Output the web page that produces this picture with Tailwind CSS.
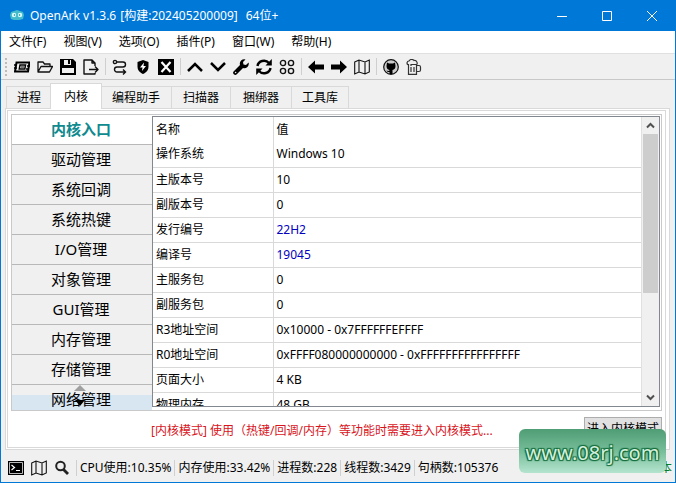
<!DOCTYPE html>
<html lang="zh-CN">
<head>
<meta charset="utf-8">
<title>OpenArk</title>
<script src="https://cdn.jsdelivr.net/npm/@tailwindcss/browser@4"></script>
</head>
<body class="font-['Noto_Sans','Noto_Sans_CJK_SC',sans-serif] text-[12px] leading-[16px] text-black">
<div class="relative flex h-screen flex-col overflow-hidden border border-[#0078d7] bg-[#f0f0f0]">

  <header class="flex h-[30px] shrink-0 items-center bg-[#0078d7] text-white">
    <svg class="ml-2 shrink-0" width="16" height="16" viewBox="0 0 16 16"><path d="M1 7 2 4l3-1 3-1 3 1 3 1 1 3-1 4-4 1H5l-3-1z" fill="#45bccb"/><circle cx="5" cy="7" r="2.200" fill="#d9ffff"/><circle cx="11" cy="7" r="2.200" fill="#d9ffff"/><circle cx="5.500" cy="7" r=".8" fill="#16788f"/><circle cx="10.500" cy="7" r=".8" fill="#16788f"/></svg>
    <h1 class="ml-[5px] flex whitespace-nowrap"><span class="mr-1">OpenArk v1.3.6</span><span class="mr-2">[构建:202405200009]</span><span>64位+</span></h1>
    <div class="ml-auto flex h-full">
      <button aria-label="最小化" class="flex w-[45px] items-center justify-center"><svg width="10" height="10" stroke="#fff"><path d="M0 5.500h10"/></svg></button>
      <button aria-label="最大化" class="flex w-[45px] items-center justify-center"><svg width="10" height="10" stroke="#fff" fill="none"><path d="M.5.5h9v9h-9z"/></svg></button>
      <button aria-label="关闭" class="flex w-[46px] items-center justify-center"><svg width="10" height="10" stroke="#fff"><path d="m0 0 10 10M10 0 0 10"/></svg></button>
    </div>
  </header>

  <nav class="flex h-[23px] shrink-0 items-center gap-[17px] border-b border-[#e0e0e0] bg-white pl-2">
    <button>文件(F)</button><button>视图(V)</button><button>选项(O)</button><button>插件(P)</button><button>窗口(W)</button><button>帮助(H)</button>
  </nav>

  <div class="flex h-[26px] shrink-0 items-center border-b border-[#c8c8c8] pl-1">
    <span class="mr-[7px] h-[18px] border-l-2 border-dotted border-[#bcbcbc]"></span>
    <div class="flex items-center gap-[7px]">
      <button aria-label="控制台"><svg width="16" height="16" viewBox="0 0 16 16" fill="none" stroke="#000"><path d="M2.500 3.500h13l-1.500 9H1z" stroke-width="2"/><path d="M0 6h3M0 9h3M13 7h3M12 10h3" stroke-width="1.500"/><path d="M6 6h5.500l-.7 4H5.300z" stroke-width="1.500"/><path d="M7 8h3"/></svg></button>
      <button aria-label="打开"><svg width="16" height="16" viewBox="0 0 16 16" fill="none" stroke="#111" stroke-width="1.300" stroke-linejoin="round"><path d="M1 13V3h5l1.500 2H13v2.500M1 13l3-5.500h11.500L12.500 13z"/></svg></button>
      <button aria-label="保存"><svg width="16" height="16" viewBox="0 0 16 16"><path fill="#000" d="M0 0h13l3 3v13H0z"/><path fill="#f0f0f0" d="M4 1h7v5H4zM2 9h12v5H2z"/><path fill="#000" d="M8 1h2v4H8z"/></svg></button>
      <button aria-label="导出"><svg width="16" height="16" viewBox="0 0 16 16" fill="none" stroke="#111" stroke-width="1.400" stroke-linejoin="round"><path d="M12 7V4L9 1H1v14h11v-1M9 1v3h3M6 10.500h9M12 7.500l3 3-3 3"/></svg></button>
    </div>
    <span class="mx-[6px] h-[17px] w-px bg-[#cfcfcf]"></span>
    <div class="flex items-center gap-[7px]">
      <button aria-label="路径"><svg width="16" height="16" viewBox="0 0 16 16" fill="none" stroke="#111" stroke-width="1.400"><path d="M4.500 3H11a2.500 2.500 0 0 1 0 5H5a2.500 2.500 0 0 0 0 5h8M11 10.500l2.500 2.500-2.500 2.500"/><circle cx="3" cy="3" r="1.600"/></svg></button>
      <button aria-label="防护"><svg width="16" height="16" viewBox="0 0 16 16"><path d="m8 1 5.500 2v4.500c0 4-2.500 6-5.500 7.500-3-1.500-5.500-3.500-5.500-7.500V3z"/><path fill="#fff" d="M9 3.500 5 8.500h2.500L7 12l4-5H8.500z"/></svg></button>
      <button aria-label="停止"><svg width="16" height="16" viewBox="0 0 16 16"><path d="M0 0h16v16H0z"/><path stroke="#fff" stroke-width="2.200" d="m3.500 3 9 10M12.500 3l-9 10"/></svg></button>
    </div>
    <span class="mx-[6px] h-[17px] w-px bg-[#cfcfcf]"></span>
    <div class="flex items-center gap-[7px]">
      <button aria-label="向上"><svg width="16" height="16" viewBox="0 0 16 16" fill="none" stroke="#000" stroke-width="2.500"><path d="m1 12 7-7 7 7"/></svg></button>
      <button aria-label="向下"><svg width="16" height="16" viewBox="0 0 16 16" fill="none" stroke="#000" stroke-width="2.500"><path d="m1 4 7 7 7-7"/></svg></button>
      <button aria-label="工具"><svg width="16" height="16" viewBox="0 0 16 16"><path d="M15.600 3.500 13 6l-2.500-.5L10 3 12.500.4A4.500 4.500 0 0 0 7 6L.8 12.200a2 2 0 0 0 3 3L10 9a4.500 4.500 0 0 0 5.600-5.500z"/><circle cx="2.600" cy="13.500" r=".8" fill="#f0f0f0"/></svg></button>
      <button aria-label="刷新"><svg width="16" height="16" viewBox="0 0 16 16" fill="none" stroke="#000" stroke-width="2.400"><path d="M1.500 7A6.500 6 0 0 1 13 4M14.500 9A6.500 6 0 0 1 3 12"/><path fill="#000" stroke="none" d="M15.800 0v6.500H9.500zM.2 16V9.500h6.300z"/></svg></button>
      <button aria-label="网格"><svg width="16" height="16" viewBox="0 0 16 16" fill="none" stroke="#111" stroke-width="1.400"><circle cx="4" cy="4" r="2.600"/><circle cx="12" cy="4" r="2.600"/><circle cx="4" cy="12" r="2.600"/><circle cx="12" cy="12" r="2.600"/></svg></button>
    </div>
    <span class="mx-[6px] h-[17px] w-px bg-[#cfcfcf]"></span>
    <div class="flex items-center gap-[7px]">
      <button aria-label="后退"><svg width="16" height="16" viewBox="0 0 16 16"><path d="M0 8l7-6.500v4h9v5H7v4z"/></svg></button>
      <button aria-label="前进"><svg width="16" height="16" viewBox="0 0 16 16"><path d="M16 8 9 1.500v4H0v5h9v4z"/></svg></button>
      <button aria-label="地图"><svg width="16" height="16" viewBox="0 0 16 16" fill="none" stroke="#111" stroke-width="1.100"><path d="M.7 3 5 1l6 2 4.300-2v12L11 15l-6-2-4.300 2zM5 1v12M11 3v12"/></svg></button>
    </div>
    <span class="mx-[6px] h-[17px] w-px bg-[#cfcfcf]"></span>
    <div class="flex items-center gap-[7px]">
      <button aria-label="GitHub"><svg width="16" height="16" viewBox="0 0 16 16"><circle cx="8" cy="8" r="7.300" fill="#ccc" stroke="#111" stroke-width="1.200"/><path d="M4 3.500 6 4.500h4l2-1 .5 3.500c0 2.500-1 3.500-3 4v4h-3v-2c-2 .3-2.500-.5-3-1.500 1 .3 2 .8 3 0V11c-2-.5-3-1.500-3-4z"/></svg></button>
      <button aria-label="赞助"><svg width="16" height="16" viewBox="0 0 16 16" fill="none" stroke="#333" stroke-width="1.200"><path d="M2.500 5v10.400h8V5M10.500 6.500H13q1.500 0 1.500 1.500v3q0 1.500-1.500 1.500h-2.500M5 8v5M8 8v5M2.500 6C0 5 1 2 3 2c1-2 4-2 5-.5C11 1 12 5 10.500 5.500H5V7"/></svg></button>
    </div>
  </div>

  <main class="flex min-h-0 flex-1 flex-col pl-1 pr-[5px] pt-[3px]">
    <div role="tablist" class="flex h-[25px] shrink-0 items-end pl-px">
      <button role="tab" class="h-[22px] border-l border-t border-[#d9d9d9] px-[10px]">进程</button>
      <button role="tab" aria-selected="true" class="relative z-10 -mx-px -mb-px h-[26px] border-x border-t border-[#d9d9d9] bg-white px-[13px]">内核</button>
      <button role="tab" class="h-[22px] border-r border-t border-[#d9d9d9] px-[11px]">编程助手</button>
      <button role="tab" class="h-[22px] border-r border-t border-[#d9d9d9] px-[11px]">扫描器</button>
      <button role="tab" class="h-[22px] border-r border-t border-[#d9d9d9] px-3">捆绑器</button>
      <button role="tab" class="h-[22px] border-r border-t border-[#d9d9d9] px-[10px]">工具库</button>
    </div>

    <div class="flex min-h-0 flex-1 flex-col border border-[#d9d9d9] bg-white py-px pl-px pr-[3px]">
      <div class="flex min-h-0 flex-1 flex-col border border-[#d9d9d9] px-[3px] pt-[3px]">
        <div class="flex min-h-0 flex-1 border border-[#c9c9c9]">
          <aside class="relative w-[140px] shrink-0 overflow-hidden bg-[#f0f0f0] text-[15px] leading-[29px]">
            <ul class="text-center *:h-[30px] *:border-b *:border-[#b8b8b8] *:pr-[2px]">
              <li class="bg-white font-bold text-[#0f8a8f]">内核入口</li><li>驱动管理</li><li>系统回调</li><li>系统热键</li><li>I/O管理</li><li>对象管理</li><li>GUI管理</li><li>内存管理</li><li>存储管理</li><li class="bg-linear-to-b from-[#f0f0f0] from-33% to-[#d8e6f2] to-33%">网络管理</li>
            </ul>
            <svg class="absolute bottom-[3px] left-[62px]" width="12" height="22" viewBox="0 0 12 22"><path fill="#a0a0a0" d="m0 6 6-6 6 6z"/><path d="M1 15h10l-5 6z"/></svg>
          </aside>
          <div class="flex min-w-0 flex-1 pb-[3px] pt-px pr-px">
            <div class="flex min-w-0 flex-1 border border-[#828790]">
              <div class="min-w-0 flex-1 overflow-hidden">
                <table class="w-full table-fixed border-collapse text-left">
                  <colgroup><col class="w-[120px]"><col></colgroup>
                  <thead><tr class="h-[25px] *:px-[3px] *:font-normal"><th class="border-r border-[#d9d9d9]">名称</th><th>值</th></tr></thead>
                  <tbody class="*:h-[25px] *:border-b *:border-[#d9d9d9] [&_td]:px-[3px] [&_td:first-child]:border-r [&_td:first-child]:border-[#d9d9d9]">
                    <tr><td>操作系统</td><td>Windows 10</td></tr>
                    <tr><td>主版本号</td><td>10</td></tr>
                    <tr><td>副版本号</td><td>0</td></tr>
                    <tr><td>发行编号</td><td class="text-[#0000c0]">22H2</td></tr>
                    <tr><td>编译号</td><td class="text-[#0000c0]">19045</td></tr>
                    <tr><td>主服务包</td><td>0</td></tr>
                    <tr><td>副服务包</td><td>0</td></tr>
                    <tr><td>R3地址空间</td><td>0x10000 - 0x7FFFFFFEFFFF</td></tr>
                    <tr><td>R0地址空间</td><td>0xFFFF080000000000 - 0xFFFFFFFFFFFFFFFF</td></tr>
                    <tr><td>页面大小</td><td>4 KB</td></tr>
                    <tr><td>物理内存</td><td>48 GB</td></tr>
                  </tbody>
                </table>
              </div>
              <div class="flex w-[18px] shrink-0 flex-col border-l border-[#e0e0e0] bg-[#f0f0f0] px-px">
                <button aria-label="向上滚动" class="flex h-[17px] items-center justify-center"><svg width="9" height="7" fill="none" stroke="#505050" stroke-width="2"><path d="m1 5.500 3.500-3.500L8 5.500"/></svg></button>
                <div class="h-[159px] bg-[#cdcdcd]"></div>
                <button aria-label="向下滚动" class="mt-auto flex h-[17px] items-center justify-center"><svg width="9" height="7" fill="none" stroke="#505050" stroke-width="2"><path d="M1 1.500 4.500 5 8 1.500"/></svg></button>
              </div>
            </div>
          </div>
        </div>
        <div class="flex h-[36px] shrink-0 items-center pl-[140px]">
          <p class="flex-1 pt-1 text-[#d8141c]">[内核模式] 使用（热键/回调/内存）等功能时需要进入内核模式...</p>
          <button class="h-[24px] w-[78px] border border-[#adadad] bg-[#e1e1e1] whitespace-nowrap">进入内核模式</button>
        </div>
      </div>
    </div>
  </main>

  <footer class="flex h-[32px] shrink-0 items-center pl-[7px] pr-[3px] pt-1">
    <div class="flex items-center gap-[7px]">
      <button aria-label="终端"><svg width="16" height="16" viewBox="0 0 16 16"><path d="M0 1h16v14H0z"/><path stroke="#bbb" fill="none" d="M1.500 2.500v11h13v-11z"/><path stroke="#fff" fill="none" stroke-width="1.200" d="M3.500 5l3 2.500-3 2.500M8 10.500h4"/></svg></button>
      <button aria-label="地图"><svg width="16" height="16" viewBox="0 0 16 16" fill="none" stroke="#111" stroke-width="1.100"><path d="M.7 3 5 1l6 2 4.300-2v12L11 15l-6-2-4.300 2zM5 1v12M11 3v12"/></svg></button>
      <button aria-label="搜索"><svg width="16" height="16" viewBox="0 0 16 16" fill="none" stroke="#222" stroke-width="2"><circle cx="6.500" cy="6" r="4.300"/><path stroke-width="2.800" d="m9.500 9.500 4.500 4.500"/></svg></button>
    </div>
    <div class="ml-[6px] flex whitespace-nowrap *:border-l *:border-[#d0d0d0] *:px-[3px]">
      <span>CPU使用:10.35%</span><span>内存使用:33.42%</span><span>进程数:228</span><span>线程数:3429</span><span>句柄数:105376</span>
    </div>
    <span class="ml-auto whitespace-nowrap text-[#0a7d2c]">已经是最新版本</span>
  </footer>

  <div class="absolute bottom-[9px] right-[9px] flex h-[44px] w-[147px] items-center justify-center rounded-md bg-linear-to-b from-[#4f9d75] via-[#76bd99] to-[#b4e4cf] pt-1 text-[20px] leading-[28px] text-[#d5f0dc] [text-shadow:1px_1px_1px_#126b3a,-1px_-1px_1px_#126b3a,1px_-1px_1px_#126b3a,-1px_1px_1px_#126b3a]">www.08rj.com</div>
</div>
</body>
</html>
